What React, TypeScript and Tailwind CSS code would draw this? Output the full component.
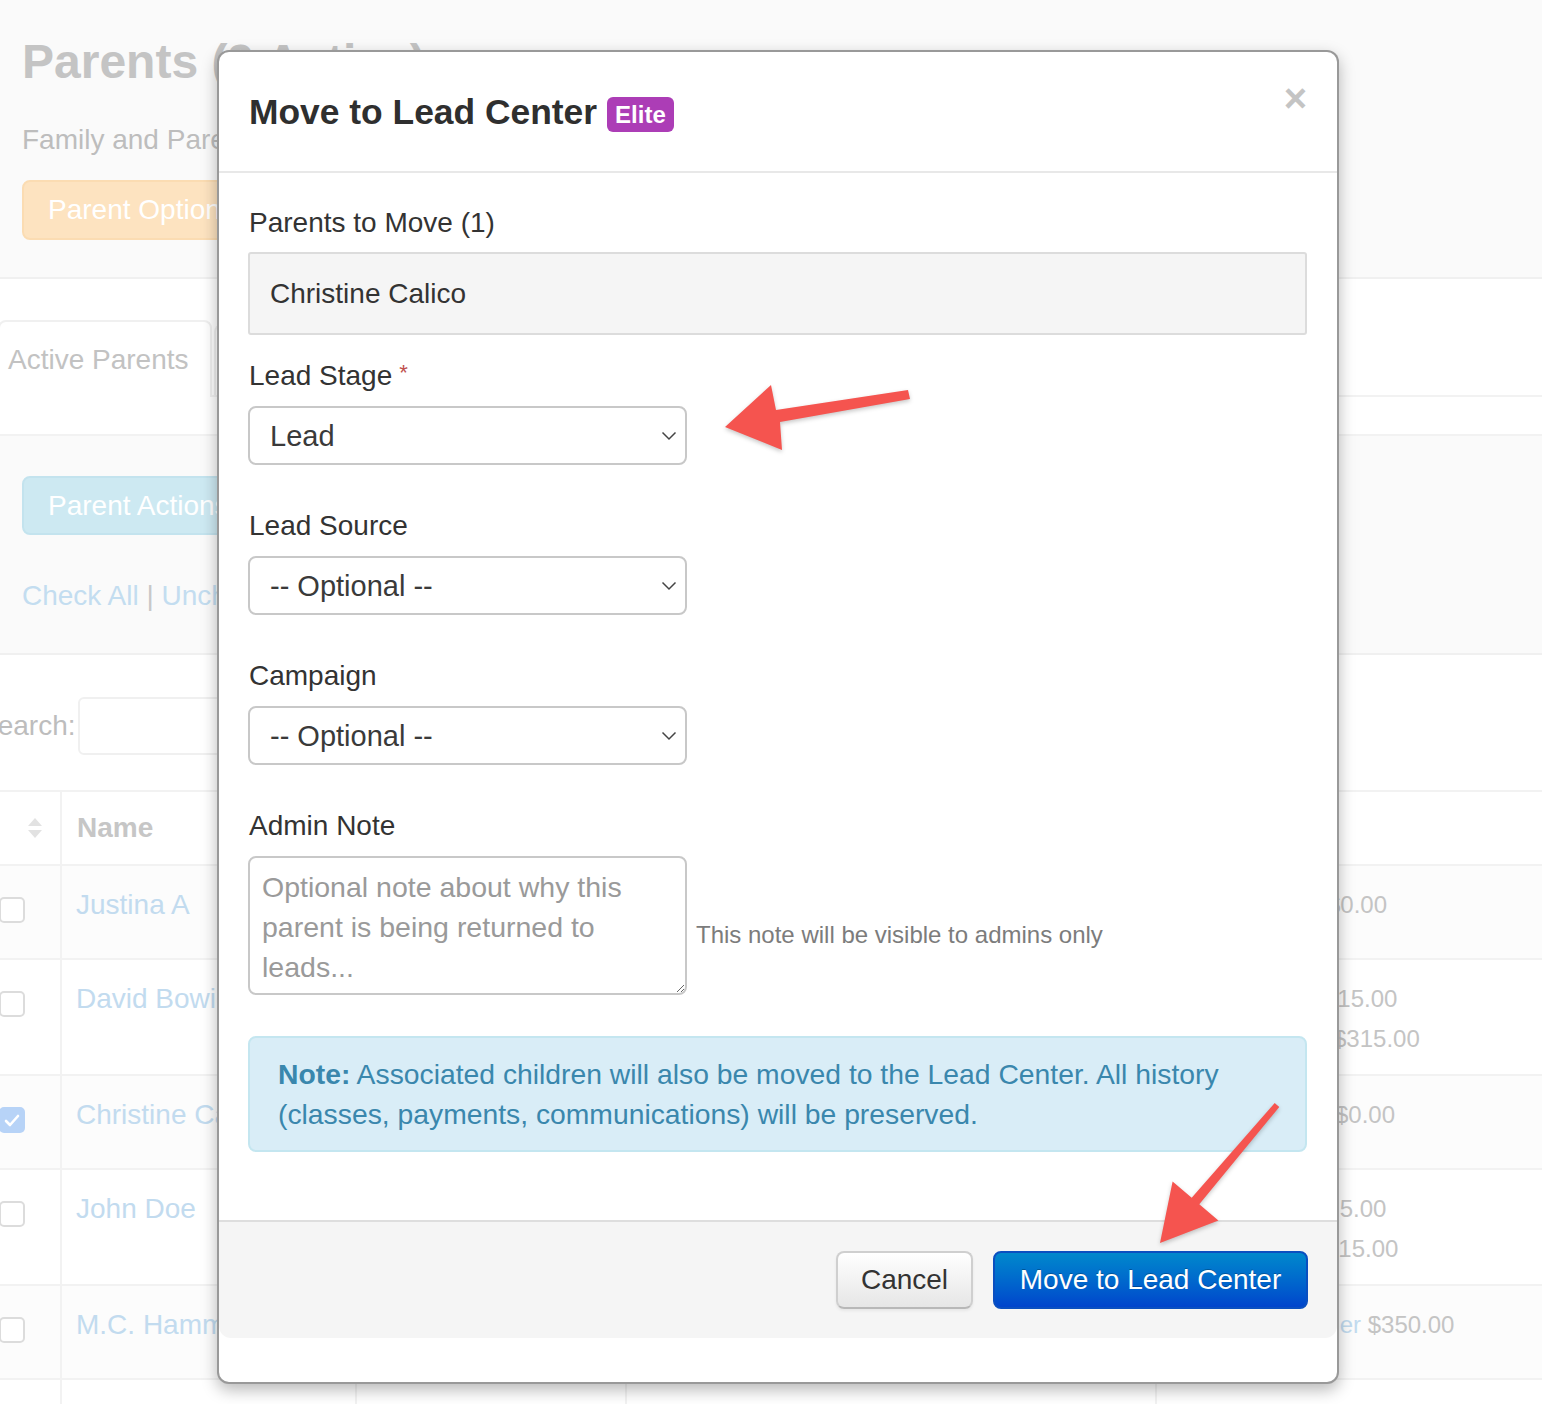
import React from 'react';

type AmountLine = { amt: string; pad: string; link?: string };

const parents: { name: string; height: string; checked: boolean; striped: boolean; lines: AmountLine[] }[] = [
  { name: 'Justina A', height: 'h-[94px]', checked: false, striped: true, lines: [{ amt: '$0.00', pad: 'pl-[170px]' }] },
  {
    name: 'David Bowie',
    height: 'h-[116px]',
    checked: false,
    striped: false,
    lines: [
      { amt: '$15.00', pad: 'pl-[167px]' },
      { amt: '$315.00', pad: 'pl-[176px]' },
    ],
  },
  { name: 'Christine Calico', height: 'h-[94px]', checked: true, striped: true, lines: [{ amt: '$0.00', pad: 'pl-[178px]' }] },
  {
    name: 'John Doe',
    height: 'h-[116px]',
    checked: false,
    striped: false,
    lines: [
      { amt: '$15.00', pad: 'pl-[156px]' },
      { amt: '$15.00', pad: 'pl-[168px]' },
    ],
  },
  { name: 'M.C. Hammer', height: 'h-[94px]', checked: false, striped: true, lines: [{ link: 'Member', amt: '$350.00', pad: 'pl-[116px]' }] },
];

function Checkbox({ checked }: { checked: boolean }) {
  if (checked) {
    return (
      <div className="w-[26px] h-[26px] rounded-[5px] bg-[#b7d3f7] flex items-center justify-center">
        <svg width="16" height="13" viewBox="0 0 16 13">
          <polyline points="2,7 6,11 14,2" fill="none" stroke="#fff" strokeWidth="2.6" strokeLinecap="round" strokeLinejoin="round" />
        </svg>
      </div>
    );
  }
  return <div className="w-[26px] h-[26px] rounded-[5px] border-2 border-[#dcdcdc] bg-white" />;
}

function ParentsPage() {
  return (
    <div className="flex flex-col text-[28px] leading-[40px]">
      {/* page header */}
      <div className="h-[279px] bg-[#fafafa] border-b-2 border-[#f0f0f0] px-[22px] pt-[34px]">
        <h1 className="text-[48px] leading-[56px] font-bold text-[#c4c4c4] whitespace-nowrap">Parents (9 Active)</h1>
        <p className="mt-[30px] text-[#bdbdbd] whitespace-nowrap">Family and Parents</p>
        <button className="mt-[20px] h-[60px] px-[24px] rounded-[8px] bg-[#fde3c0] border-2 border-[#fbdcb2] text-white whitespace-nowrap">
          Parent Options
        </button>
      </div>

      {/* tabs */}
      <div className="h-[157px] bg-white border-b-2 border-[#f2f2f2] pt-[41px]">
        <div className="flex h-[77px] border-b-2 border-[#f2f2f2]">
          <div className="ml-[-2px] w-[214px] h-[77px] bg-white border-2 border-b-0 border-[#f0f0f0] rounded-t-[8px] pl-[8px] flex items-center text-[#c2c2c2] whitespace-nowrap">
            Active Parents
          </div>
          <div className="ml-[2px] mt-[4px] w-[260px] h-[71px] border-2 border-b-0 border-[#f0f0f0] rounded-t-[8px] pl-[24px] flex items-center text-[#c8dcee] whitespace-nowrap">
            Inactive Parents
          </div>
        </div>
      </div>

      {/* bulk actions */}
      <div className="h-[219px] bg-[#fafafa] border-b-2 border-[#f0f0f0] px-[22px] pt-[40px]">
        <button className="h-[59px] px-[24px] rounded-[8px] bg-[#cde9f2] border-2 border-[#c3e3ee] text-white whitespace-nowrap">
          Parent Actions
        </button>
        <div className="mt-[41px] text-[#c3ddf0] whitespace-nowrap">
          Check All <span className="text-[#c8c8c8]">|</span> Uncheck All
        </div>
      </div>

      {/* search */}
      <div className="h-[137px] bg-white border-b-2 border-[#f2f2f2] pt-[42px] flex items-start">
        <label className="ml-[-21px] h-[58px] flex items-center text-[#bdbdbd] whitespace-nowrap">Search:</label>
        <div className="ml-[2px] w-[300px] h-[58px] rounded-[6px] border-2 border-[#f0f0f0] bg-white" />
      </div>

      {/* table */}
      <div className="grid grid-cols-[60px_295px_270px_530px_1fr] h-[74px] border-b-2 border-[#f2f2f2] bg-white">
        <div className="flex items-center justify-end pr-[17px]">
          <svg width="16" height="24" viewBox="0 0 16 24">
            <polygon points="8,2 15,10 1,10" fill="#e2e2e2" />
            <polygon points="1,14 15,14 8,22" fill="#e2e2e2" />
          </svg>
        </div>
        <div className="border-l-2 border-[#f2f2f2] pl-[15px] flex items-center font-bold text-[#c6c6c6]">Name</div>
        <div className="border-l-2 border-[#f2f2f2]" />
        <div className="border-l-2 border-[#f2f2f2]" />
        <div className="border-l-2 border-[#f2f2f2]" />
      </div>
      {parents.map((p) => (
        <div
          key={p.name}
          className={`grid grid-cols-[60px_295px_270px_530px_1fr] border-b-2 border-[#f2f2f2] ${p.height} ${p.striped ? 'bg-[#fcfcfc]' : 'bg-white'}`}
        >
          <div className="pt-[31px] ml-[-1px]">
            <Checkbox checked={p.checked} />
          </div>
          <div className="border-l-2 border-[#f2f2f2] pl-[14px] pt-[19px] text-[#c2dbef] whitespace-nowrap">{p.name}</div>
          <div className="border-l-2 border-[#f2f2f2]" />
          <div className="border-l-2 border-[#f2f2f2]" />
          <div className="border-l-2 border-[#f2f2f2] pt-[19px] text-[24px] text-[#c4c4c4]">
            {p.lines.map((line, i) => (
              <div key={i} className={`${line.pad} whitespace-nowrap`}>
                {line.link && <span className="text-[#c2dbef]">{line.link} </span>}
                {line.amt}
              </div>
            ))}
          </div>
        </div>
      ))}
      <div className="grid grid-cols-[60px_295px_270px_530px_1fr] h-[80px] bg-white">
        <div />
        <div className="border-l-2 border-[#f2f2f2]" />
        <div className="border-l-2 border-[#f2f2f2]" />
        <div className="border-l-2 border-[#f2f2f2]" />
        <div className="border-l-2 border-[#f2f2f2]" />
      </div>
    </div>
  );
}

function SelectBox({ value }: { value: string }) {
  return (
    <div className="w-[439px] h-[59px] border-2 border-[#c8c8c8] rounded-[8px] bg-white flex items-center justify-between pl-[20px] pr-[8px] text-[29px] text-[#3a3a3a]">
      <span>{value}</span>
      <svg width="16" height="10" viewBox="0 0 16 10">
        <polyline points="1.5,1.5 8,8 14.5,1.5" fill="none" stroke="#444" strokeWidth="1.5" />
      </svg>
    </div>
  );
}

function FieldLabel({ children, required }: { children: React.ReactNode; required?: boolean }) {
  return (
    <div className="h-[40px] leading-[40px] pl-[1px] mb-[10px] text-[#333]">
      {children}
      {required && <span className="ml-[7px] text-[#c0504d] text-[22px] align-top relative top-[-3px]">*</span>}
    </div>
  );
}

function MoveToLeadModal() {
  return (
    <div className="absolute left-[217px] top-[50px] w-[1122px] h-[1334px] bg-white border-2 border-black/40 rounded-[12px] shadow-[0_6px_16px_rgba(0,0,0,0.28)] flex flex-col text-[28px] leading-[40px] text-[#333]">
      <div className="h-[121px] shrink-0 border-b-2 border-[#e8e8e8] flex justify-between pl-[30px] pr-[30px]">
        <div className="flex items-center">
          <h3 className="text-[35.4px] leading-[40px] font-bold text-[#2f2f2f] whitespace-nowrap">Move to Lead Center</h3>
          <span className="ml-[10px] mt-[5px] h-[35px] px-[8px] rounded-[6px] bg-[#ac3db6] text-white font-bold text-[24px] leading-[35px]">
            Elite
          </span>
        </div>
        <span className="mt-[26px] text-[40px] leading-[40px] font-bold text-[#c4c4c4]">×</span>
      </div>

      <div className="pl-[29px] pr-[30px] pt-[30px] pb-[68px]">
        <div className="h-[40px] pl-[1px] mb-[9px]">Parents to Move (1)</div>
        <div className="h-[83px] border-2 border-[#dcdcdc] bg-[#f5f5f5] rounded-[3px] flex items-center pl-[20px] text-[#333]">
          Christine Calico
        </div>

        <div className="mt-[21px]">
          <FieldLabel required>Lead Stage</FieldLabel>
          <SelectBox value="Lead" />
        </div>
        <div className="mt-[41px]">
          <FieldLabel>Lead Source</FieldLabel>
          <SelectBox value="-- Optional --" />
        </div>
        <div className="mt-[41px]">
          <FieldLabel>Campaign</FieldLabel>
          <SelectBox value="-- Optional --" />
        </div>
        <div className="mt-[41px]">
          <FieldLabel>Admin Note</FieldLabel>
          <div className="flex items-center">
            <textarea
              readOnly
              placeholder="Optional note about why this parent is being returned to leads..."
              className="w-[439px] h-[139px] border-2 border-[#c8c8c8] rounded-[8px] px-[12px] pt-[9px] text-[28.5px] leading-[40px] text-[#333] placeholder:text-[#9a9a9a] outline-none"
            />
            <span className="ml-[9px] mt-[19px] text-[24px] text-[#7c7c7c] whitespace-nowrap">This note will be visible to admins only</span>
          </div>
        </div>

        <div className="mt-[41px] border-2 border-[#c4e6f0] bg-[#d9edf7] rounded-[8px] px-[28px] py-[16px] text-[28.3px] text-[#3a87ad]">
          <strong>Note:</strong> Associated children will also be moved to the Lead Center. All history (classes, payments,
          communications) will be preserved.
        </div>
      </div>

      <div className="border-t-2 border-[#dedede] bg-[#f5f5f5] rounded-b-[12px] pt-[29px] pb-[29px] pr-[29px] flex justify-end gap-[20px]">
        <button className="w-[137px] h-[58px] rounded-[8px] border-2 border-[#cfcfcf] border-b-[#b8b8b8] bg-linear-to-b from-white to-[#e6e6e6] text-[#333] shadow-[0_2px_3px_rgba(0,0,0,0.06)]">
          Cancel
        </button>
        <button className="w-[315px] h-[58px] rounded-[8px] border-2 border-[#0a4fc0] bg-linear-to-b from-[#0088cc] to-[#0044cc] text-white [text-shadow:0_-1px_0_rgba(0,0,0,0.25)]">
          Move to Lead Center
        </button>
      </div>
    </div>
  );
}

function CalloutArrows() {
  return (
    <svg
      className="absolute left-0 top-0 pointer-events-none drop-shadow-[0_2px_2px_rgba(0,0,0,0.22)]"
      width="1542"
      height="1404"
      viewBox="0 0 1542 1404"
    >
      <polygon points="725,427 771,385 776,410 908,390 910,399 780,422 782,450" fill="#f5544f" />
      <polygon
        points="1160,1243 1172.6,1181.6 1191.7,1197.8 1274.7,1103.1 1279.3,1106.9 1199.3,1204.2 1218.4,1220.4"
        fill="#f5544f"
      />
    </svg>
  );
}

export default function App() {
  return (
    <div className="relative w-full h-[1404px] overflow-hidden bg-white font-['Liberation_Sans',Arial,sans-serif]">
      <ParentsPage />
      <MoveToLeadModal />
      <CalloutArrows />
    </div>
  );
}
